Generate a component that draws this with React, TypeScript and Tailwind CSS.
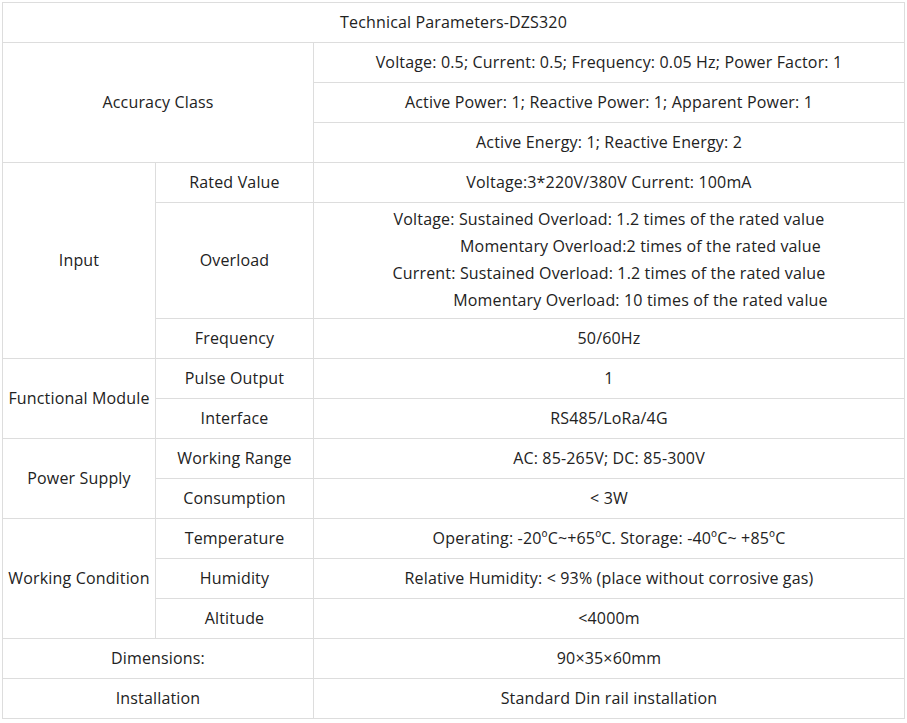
import React from "react";

const cell = "border border-[#dddddd] text-center align-middle pt-0 pb-[2px] px-0";

export default function App() {
  return (
    <div className="bg-white w-[907px] h-[723px] pt-[2px] pl-[2px]">
      <table
        className="border-collapse w-[902px] text-[16px] tracking-[0.16px] text-[#222222] table-fixed"
        style={{ fontFamily: '"Open Sans", "Liberation Sans", sans-serif' }}
      >
        <colgroup>
          <col className="w-[153px]" />
          <col className="w-[158px]" />
          <col className="w-[591px]" />
        </colgroup>
        <tbody>
          <tr className="h-[40px]">
            <td className={cell} colSpan={3}>Technical Parameters-DZS320</td>
          </tr>
          <tr className="h-[40px]">
            <td className={cell} colSpan={2} rowSpan={3}>Accuracy Class</td>
            <td className={cell}>Voltage: 0.5; Current: 0.5; Frequency: 0.05 Hz; Power Factor: 1</td>
          </tr>
          <tr className="h-[40px]">
            <td className={cell}>Active Power: 1; Reactive Power: 1; Apparent Power: 1</td>
          </tr>
          <tr className="h-[40px]">
            <td className={cell}>Active Energy: 1; Reactive Energy: 2</td>
          </tr>
          <tr className="h-[40px]">
            <td className={cell} rowSpan={3}>Input</td>
            <td className={cell}>Rated Value</td>
            <td className={cell}>Voltage:3*220V/380V Current: 100mA</td>
          </tr>
          <tr className="h-[116px]">
            <td className={cell}>Overload</td>
            <td className={cell}>
              <div className="leading-[27px]">
                <div>Voltage: Sustained Overload: 1.2 times of the rated value</div>
                <div className="pl-[63px]">Momentary Overload:2 times of the rated value</div>
                <div>Current: Sustained Overload: 1.2 times of the rated value</div>
                <div className="pl-[63px]">Momentary Overload: 10 times of the rated value</div>
              </div>
            </td>
          </tr>
          <tr className="h-[40px]">
            <td className={cell}>Frequency</td>
            <td className={cell}>50/60Hz</td>
          </tr>
          <tr className="h-[40px]">
            <td className={cell} rowSpan={2}>Functional Module</td>
            <td className={cell}>Pulse Output</td>
            <td className={cell}>1</td>
          </tr>
          <tr className="h-[40px]">
            <td className={cell}>Interface</td>
            <td className={cell}>RS485/LoRa/4G</td>
          </tr>
          <tr className="h-[40px]">
            <td className={cell} rowSpan={2}>Power Supply</td>
            <td className={cell}>Working Range</td>
            <td className={cell}>AC: 85-265V; DC: 85-300V</td>
          </tr>
          <tr className="h-[40px]">
            <td className={cell}>Consumption</td>
            <td className={cell}>&lt; 3W</td>
          </tr>
          <tr className="h-[40px]">
            <td className={cell} rowSpan={3}>Working Condition</td>
            <td className={cell}>Temperature</td>
            <td className={cell}>Operating: -20ºC~+65ºC. Storage: -40ºC~ +85ºC</td>
          </tr>
          <tr className="h-[40px]">
            <td className={cell}>Humidity</td>
            <td className={cell}>Relative Humidity: &lt; 93% (place without corrosive gas)</td>
          </tr>
          <tr className="h-[40px]">
            <td className={cell}>Altitude</td>
            <td className={cell}>&lt;4000m</td>
          </tr>
          <tr className="h-[40px]">
            <td className={cell} colSpan={2}>Dimensions:</td>
            <td className={cell}>90×35×60mm</td>
          </tr>
          <tr className="h-[40px]">
            <td className={cell} colSpan={2}>Installation</td>
            <td className={cell}>Standard Din rail installation</td>
          </tr>
        </tbody>
      </table>
    </div>
  );
}
